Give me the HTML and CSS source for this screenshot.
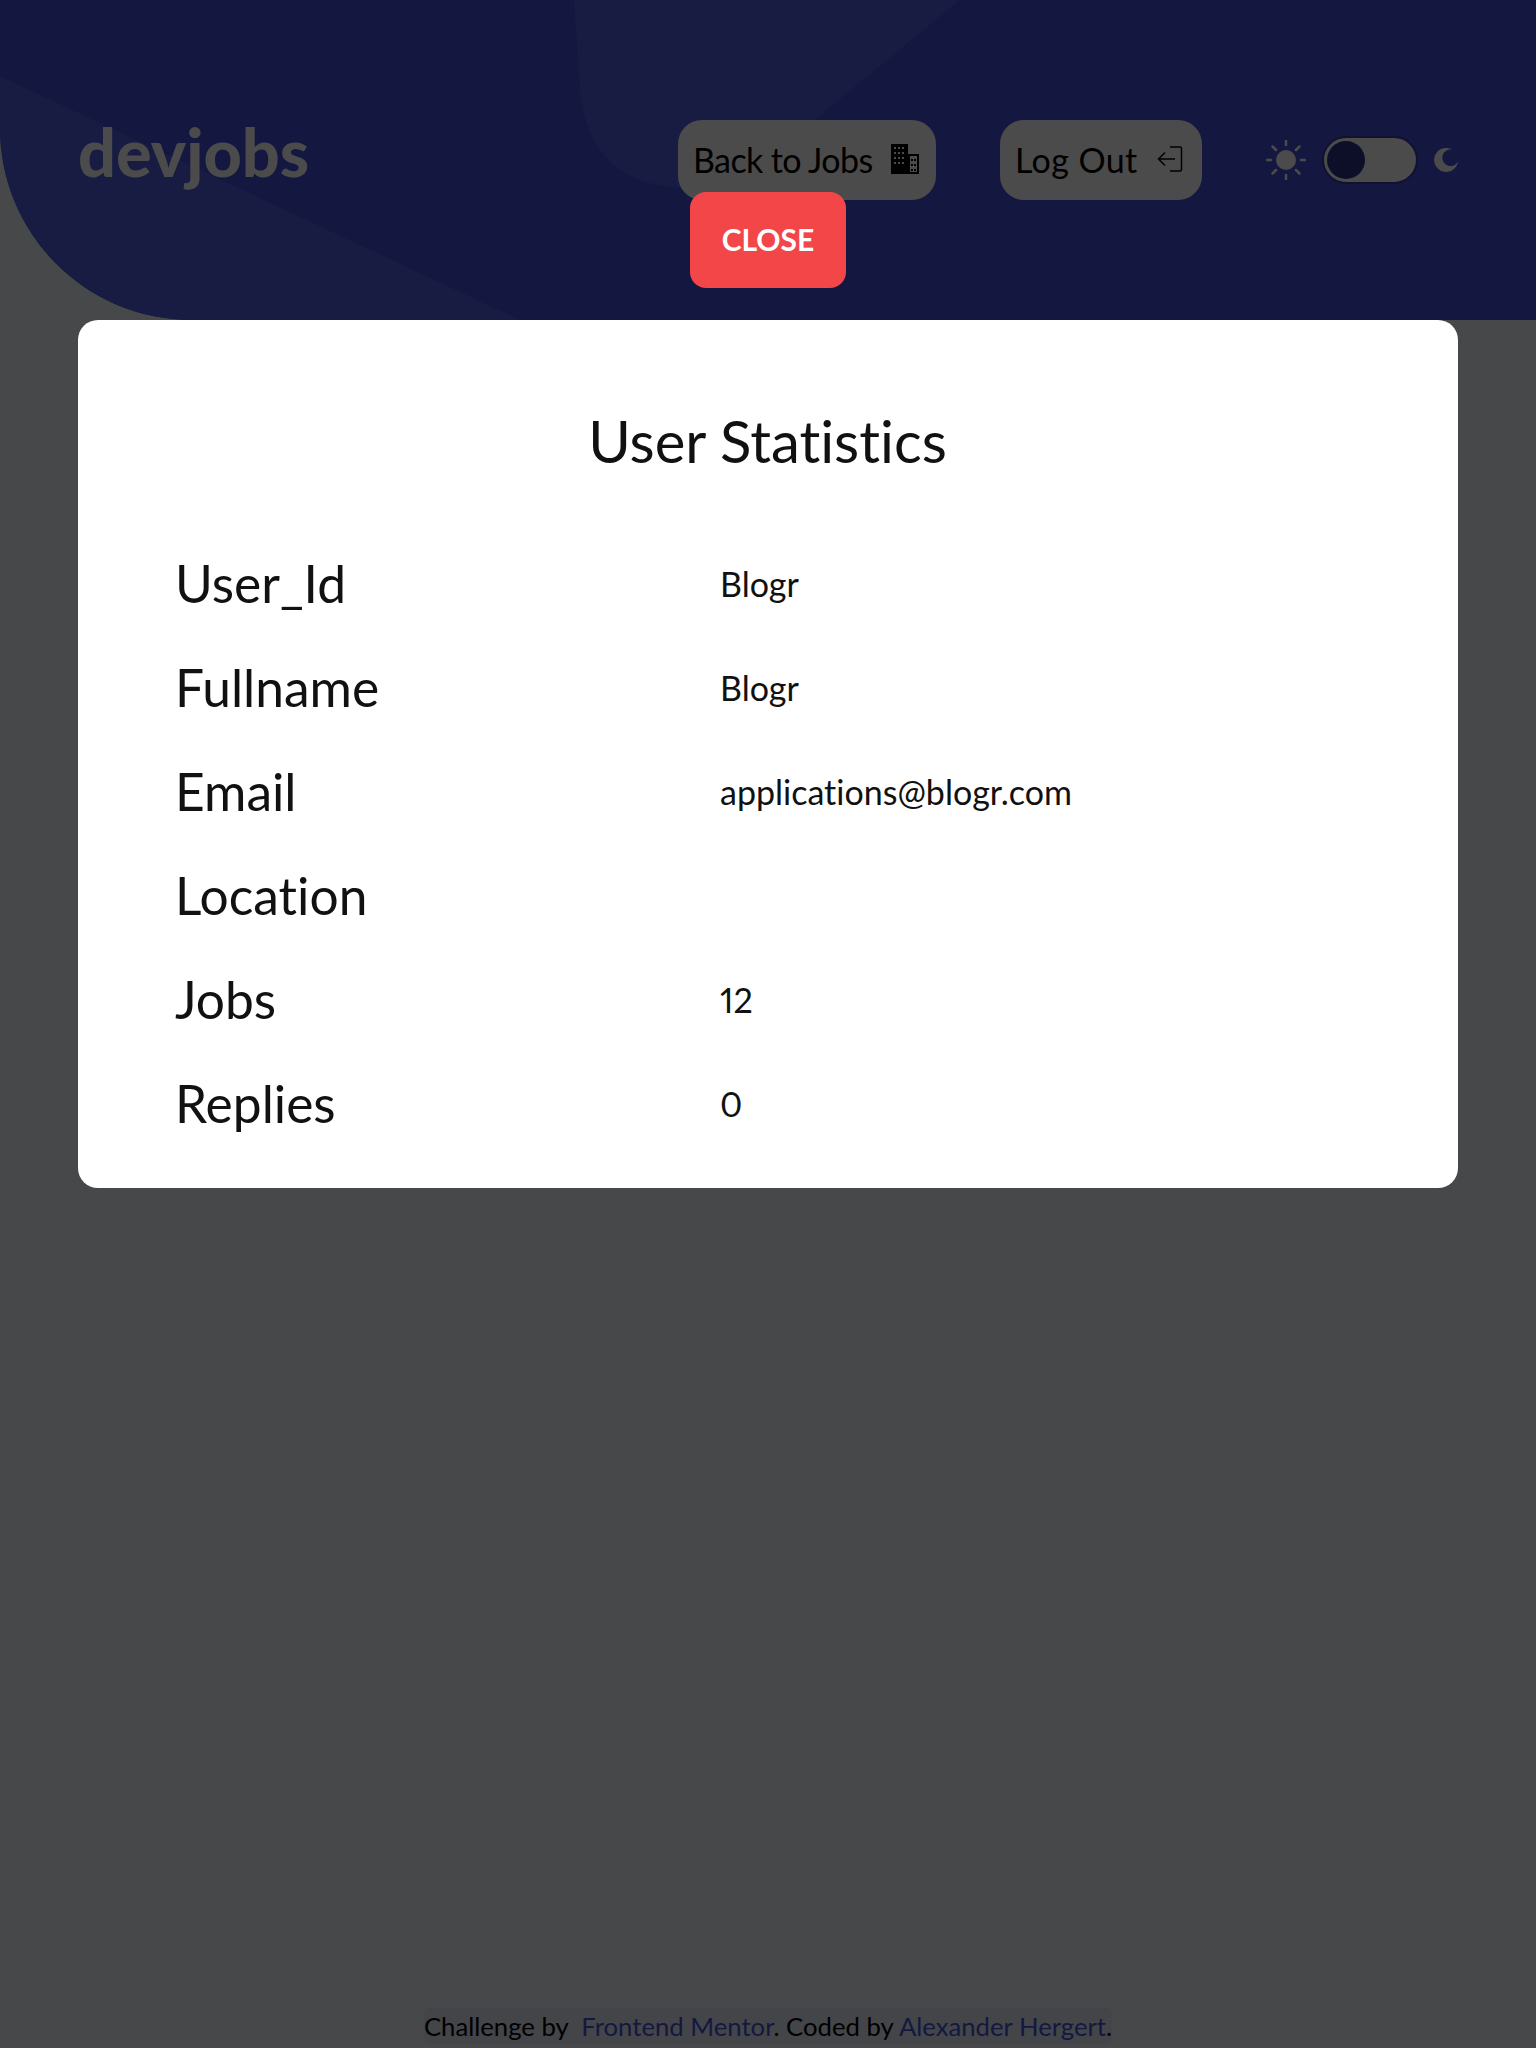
FILE: index.html
```html
<!DOCTYPE html>
<html lang="en">
<head>
    <meta charset="UTF-8">
    <meta name="viewport" content="width=device-width, initial-scale=1.0">
    <title>devjobs - User Statistics</title>
    <link rel="stylesheet" href="styles.css">
</head>
<body>
    <div class="page">
        <header class="header">
            <svg class="header-pattern" viewBox="0 0 1536 320" width="1536" height="320">
                <path d="M0 76 L520 320 L0 320 Z" fill="#181c43"/>
                <path d="M574 0 L580 90 Q590 185 680 187 L710 187 Q730 186 760 165 L960 0 Z" fill="#181c43"/>
            </svg>
            <div class="logo">devjobs</div>
            <nav class="nav">
                <a class="nav-btn nav-btn-jobs">Back to Jobs
                    <svg class="icon" width="30" height="30" viewBox="0 0 30 30">
                        <path d="M1 0h17v30H1z" fill="#000"/>
                        <path d="M18 10h11v20H18z" fill="#000"/>
                        <path d="M20 12h7v16h-7z" fill="#4b4b4b"/>
                        <g fill="#4b4b4b">
                            <rect x="4" y="3" width="2" height="2"/><rect x="8" y="3" width="2" height="2"/><rect x="12" y="3" width="2" height="2"/>
                            <rect x="4" y="8" width="2" height="2"/><rect x="8" y="8" width="2" height="2"/><rect x="12" y="8" width="2" height="2"/>
                            <rect x="4" y="13" width="2" height="2"/><rect x="8" y="13" width="2" height="2"/><rect x="12" y="13" width="2" height="2"/>
                            <rect x="4" y="18" width="2" height="2"/><rect x="8" y="18" width="2" height="2"/><rect x="12" y="18" width="2" height="2"/>
                        </g>
                        <g fill="#000">
                            <rect x="21" y="15" width="2" height="2"/><rect x="24" y="15" width="2" height="2"/>
                            <rect x="21" y="20" width="2" height="2"/><rect x="24" y="20" width="2" height="2"/>
                            <rect x="21" y="25" width="2" height="2"/><rect x="24" y="25" width="2" height="2"/>
                        </g>
                    </svg>
                </a>
                <a class="nav-btn nav-btn-logout">Log Out
                    <svg class="icon" width="26" height="26" viewBox="0 0 26 26" fill="none" stroke="#000" stroke-width="1.5">
                        <path d="M13 1h10a1.500 1.500 0 0 1 1.500 1.500v21a1.500 1.500 0 0 1-1.500 1.500h-10"/>
                        <path d="M18 13H1.500M8 6.500 1.500 13 8 19.500"/>
                    </svg>
                </a>
                <div class="theme-toggle">
                    <svg width="40" height="40" viewBox="0 0 40 40" fill="#4b4b4b">
                        <circle cx="20" cy="20" r="10"/>
                        <g stroke="#4b4b4b" stroke-width="2.500" stroke-linecap="round">
                            <path d="M20 1v4M20 35v4M1 20h4M35 20h4M6.500 6.500l3.500 3.500M30 30l3.500 3.500M6.500 33.500l3.500-3.500M30 10l3.500-3.500"/>
                        </g>
                    </svg>
                    <div class="switch"><span class="knob"></span></div>
                    <svg width="24" height="24" viewBox="0 0 24 24" fill="#4b4b4b">
                        <path d="M18 1.500A12 12 0 1 0 24 13.500A8.300 8.300 0 1 1 18 1.500Z"/>
                    </svg>
                </div>
            </nav>
        </header>
        <main class="main"></main>
        <footer class="footer">
            <p class="credit">Challenge by &nbsp;<a>Frontend Mentor</a>. Coded by <a>Alexander Hergert</a>.</p>
        </footer>
    </div>

    <div class="overlay">
        <button class="close-btn">CLOSE</button>
        <section class="modal">
            <h2 class="modal-title">User Statistics</h2>
            <div class="stat-row"><span class="stat-label">User_Id</span><span class="stat-value">Blogr</span></div>
            <div class="stat-row"><span class="stat-label">Fullname</span><span class="stat-value">Blogr</span></div>
            <div class="stat-row"><span class="stat-label">Email</span><span class="stat-value">applications@blogr.com</span></div>
            <div class="stat-row"><span class="stat-label">Location</span><span class="stat-value"></span></div>
            <div class="stat-row"><span class="stat-label">Jobs</span><span class="stat-value">12</span></div>
            <div class="stat-row"><span class="stat-label">Replies</span><span class="stat-value">0</span></div>
        </section>
    </div>
</body>
</html>
```

FILE: styles.css
```css
* {
    box-sizing: border-box;
}
body {
    margin: 0;
    background-color: #47484a;
    font-family: "Lato", "Open Sans", sans-serif;
    font-variant-ligatures: none;
    font-variant-numeric: proportional-nums;
    color: #000;
}
.page {
    min-height: 2048px;
    display: flex;
    flex-direction: column;
}
.header {
    position: relative;
    height: 320px;
    padding: 120px 78px 0 78px;
    background-color: #141840;
    border-bottom-left-radius: 192px;
    display: flex;
    justify-content: space-between;
    align-items: flex-start;
    overflow: hidden;
}
.header-pattern {
    position: absolute;
    top: 0;
    left: 0;
}
.logo {
    position: relative;
    font-size: 66.500px;
    line-height: 72px;
    font-weight: 900;
    margin-top: -5px;
    color: #4b4b4b;
}
.nav {
    position: relative;
    display: flex;
    align-items: center;
}
.nav-btn {
    height: 80px;
    padding: 0 16px 2px 15px;
    border-radius: 24px;
    background-color: #4b4b4b;
    display: flex;
    align-items: center;
    justify-content: space-between;
    font-size: 34px;
}
.nav-btn-jobs {
    width: 258px;
    letter-spacing: -0.6px;
}
.nav-btn-logout {
    width: 202px;
    margin-left: 64px;
    padding-right: 19px;
    letter-spacing: 0.4px;
}
.theme-toggle {
    display: flex;
    align-items: center;
    margin-left: 64px;
}
.switch {
    width: 96px;
    height: 48px;
    margin: 0 16px;
    padding: 3px;
    border: 2px solid #101230;
    border-radius: 24px;
    background-color: #4b4b4b;
}
.knob {
    display: block;
    width: 38px;
    height: 38px;
    border-radius: 50%;
    background-color: #0d0f29;
}
.main {
    flex: 1;
}
.footer {
    text-align: center;
}
.credit {
    display: inline-block;
    margin: 0 0 4px 0;
    height: 36px;
    line-height: 36px;
    font-size: 25.700px;
    border-radius: 6px;
    background-color: #434548;
}
.credit a {
    color: #141840;
}
.overlay {
    position: absolute;
    top: 0;
    left: 0;
    width: 1536px;
    padding: 192px 78px 0 78px;
    display: flex;
    flex-direction: column;
    align-items: center;
}
.close-btn {
    width: 156px;
    height: 96px;
    margin-bottom: 32px;
    padding-bottom: 4px;
    border: none;
    border-radius: 16px;
    background-color: #f24649;
    color: #fff;
    font-family: inherit;
    font-size: 30px;
    font-weight: 700;
}
.modal {
    width: 100%;
    height: 868px;
    padding: 53px 98px 0 97px;
    background-color: #fff;
    border-radius: 20px;
}
.modal-title {
    margin: 0 0 22px 0;
    height: 136px;
    line-height: 136px;
    text-align: center;
    font-size: 58px;
    font-weight: 400;
    color: #111;
}
.stat-row {
    height: 104px;
    display: flex;
    align-items: center;
    color: #111;
}
.stat-label {
    width: 545px;
    font-size: 51.500px;
}
.stat-value {
    font-size: 34px;
}
```
